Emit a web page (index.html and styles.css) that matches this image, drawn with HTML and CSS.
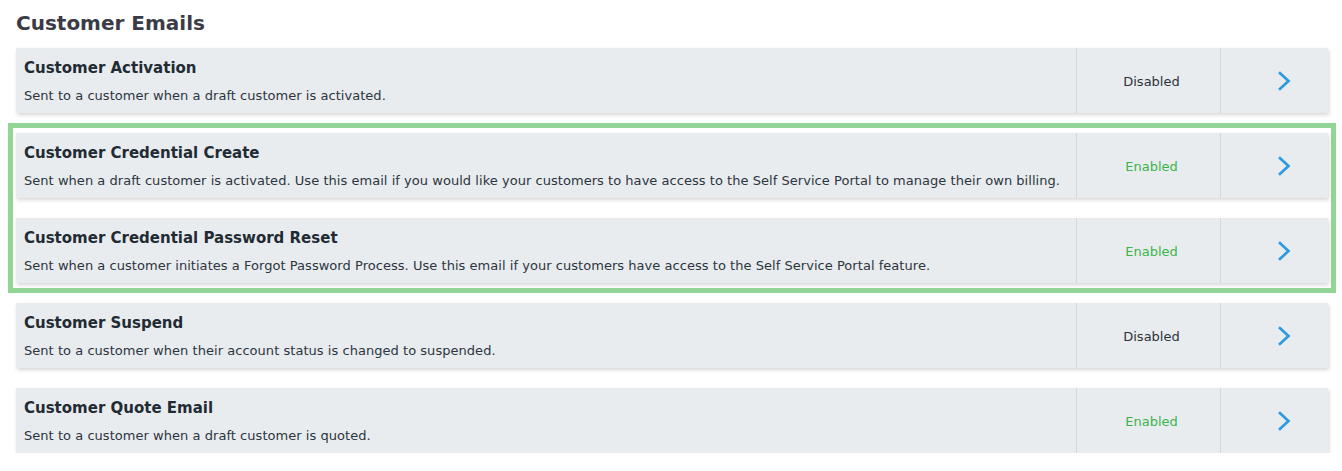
FILE: index.html
```html
<!DOCTYPE html>
<html lang="en">
<head>
<meta charset="utf-8">
<title>Customer Emails</title>
<link rel="stylesheet" href="styles.css">
</head>
<body>
<div class="page">
  <h1 class="page-title">Customer Emails</h1>
  <div class="list">
    <div class="card">
      <div class="card-main">
        <div class="card-title">Customer Activation</div>
        <div class="card-desc">Sent to a customer when a draft customer is activated.</div>
      </div>
      <div class="card-status">Disabled</div>
      <div class="card-arrow"><svg class="chev" viewBox="0 0 14 20" width="14" height="20"><path d="M2 1.2 L11.5 10 L2 18.8" /></svg></div>
    </div>
    <div class="group">
      <div class="card">
        <div class="card-main">
          <div class="card-title">Customer Credential Create</div>
          <div class="card-desc">Sent when a draft customer is activated. Use this email if you would like your customers to have access to the Self Service Portal to manage their own billing.</div>
        </div>
        <div class="card-status enabled">Enabled</div>
        <div class="card-arrow"><svg class="chev" viewBox="0 0 14 20" width="14" height="20"><path d="M2 1.2 L11.5 10 L2 18.8" /></svg></div>
      </div>
      <div class="card">
        <div class="card-main">
          <div class="card-title">Customer Credential Password Reset</div>
          <div class="card-desc">Sent when a customer initiates a Forgot Password Process. Use this email if your customers have access to the Self Service Portal feature.</div>
        </div>
        <div class="card-status enabled">Enabled</div>
        <div class="card-arrow"><svg class="chev" viewBox="0 0 14 20" width="14" height="20"><path d="M2 1.2 L11.5 10 L2 18.8" /></svg></div>
      </div>
    </div>
    <div class="card">
      <div class="card-main">
        <div class="card-title">Customer Suspend</div>
        <div class="card-desc">Sent to a customer when their account status is changed to suspended.</div>
      </div>
      <div class="card-status">Disabled</div>
      <div class="card-arrow"><svg class="chev" viewBox="0 0 14 20" width="14" height="20"><path d="M2 1.2 L11.5 10 L2 18.8" /></svg></div>
    </div>
    <div class="card">
      <div class="card-main">
        <div class="card-title">Customer Quote Email</div>
        <div class="card-desc">Sent to a customer when a draft customer is quoted.</div>
      </div>
      <div class="card-status enabled">Enabled</div>
      <div class="card-arrow"><svg class="chev" viewBox="0 0 14 20" width="14" height="20"><path d="M2 1.2 L11.5 10 L2 18.8" /></svg></div>
    </div>
  </div>
</div>
</body>
</html>
```
FILE: styles.css
```css
html, body {
  margin: 0;
  padding: 0;
  background: #ffffff;
}
body {
  font-family: "DejaVu Sans", Verdana, sans-serif;
  color: #2a333c;
}
.page {
  padding: 11px 14px 0 16px;
}
.page-title {
  margin: 0;
  font-size: 20px;
  line-height: 24px;
  font-weight: bold;
  color: #3a3b46;
}
.list {
  margin-top: 13px;
  display: flex;
  flex-direction: column;
  gap: 20px;
}
.group {
  margin: -10px -8px;
  border: 5px solid #93d596;
  padding: 5px 3px 5px 3px;
  display: flex;
  flex-direction: column;
  gap: 20px;
}
.card {
  height: 65px;
  display: flex;
  background: #e9ecef;
  box-shadow: 1px 2px 4px rgba(0, 0, 0, 0.16);
}
.card-main {
  flex: 1;
  padding: 10px 8px 0 8px;
}
.card-title {
  font-size: 15px;
  font-weight: bold;
  line-height: 20px;
  color: #222b33;
}
.card-desc {
  margin-top: 10px;
  font-size: 13px;
  line-height: 16px;
  letter-spacing: 0.04px;
  color: #2c353e;
}
.card-status {
  width: 137px;
  padding-left: 6px;
  padding-top: 2px;
  border-left: 1px solid #d2d8de;
  display: flex;
  align-items: center;
  justify-content: center;
  font-size: 13px;
  color: #2c333a;
}
.card-status.enabled {
  color: #3bb44b;
}
.card-arrow {
  width: 89px;
  padding-left: 18px;
  border-left: 1px solid #d2d8de;
  display: flex;
  align-items: center;
  justify-content: center;
}
.chev {
  display: block;
}
.chev path {
  fill: none;
  stroke: #2b9ae0;
  stroke-width: 2.7;
  stroke-linecap: butt;
  stroke-linejoin: miter;
}
```
